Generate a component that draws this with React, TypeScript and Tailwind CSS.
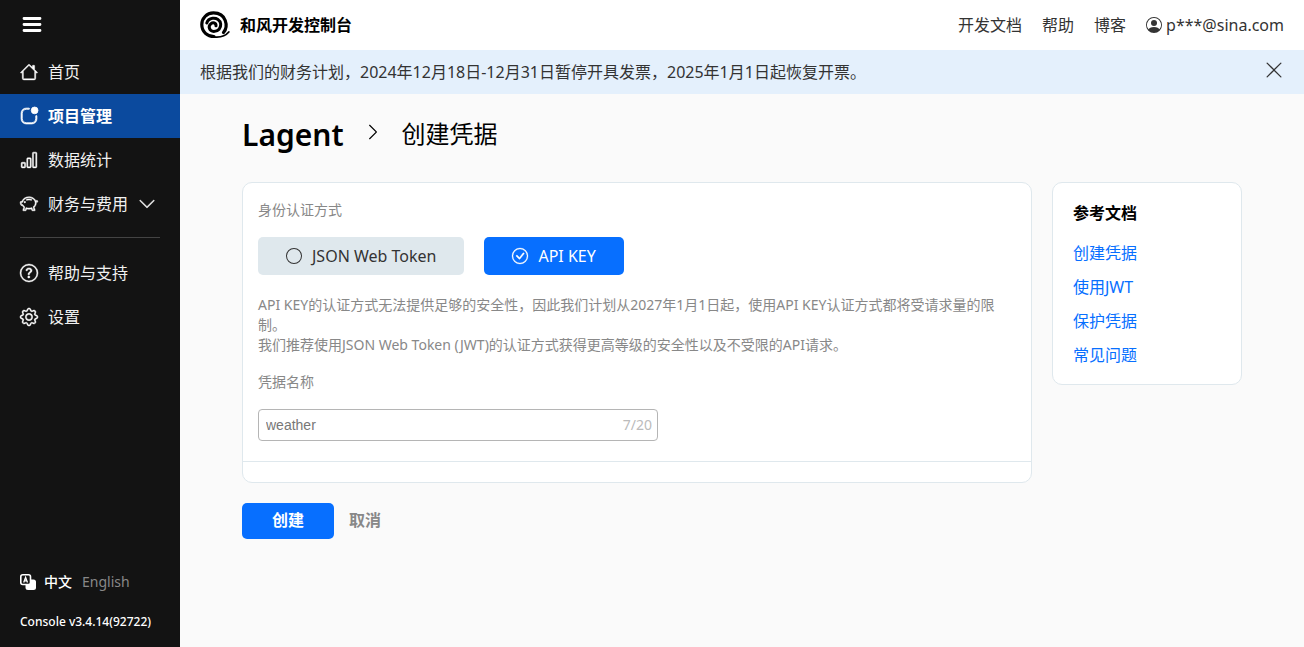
import { useState } from 'react';
import type { IconType } from 'react-icons';
import {
  BsAppIndicator,
  BsBarChart,
  BsCheckCircle,
  BsChevronDown,
  BsChevronRight,
  BsCircle,
  BsGear,
  BsHouse,
  BsPersonCircle,
  BsPiggyBank,
  BsQuestionCircle,
  BsXLg
} from 'react-icons/bs';

type NavItem = {
  label: string;
  icon: IconType;
  active?: boolean;
  expandable?: boolean;
};

const mainNav: NavItem[] = [
  { label: '首页', icon: BsHouse },
  { label: '项目管理', icon: BsAppIndicator, active: true },
  { label: '数据统计', icon: BsBarChart },
  { label: '财务与费用', icon: BsPiggyBank, expandable: true }
];

const extraNav: NavItem[] = [
  { label: '帮助与支持', icon: BsQuestionCircle },
  { label: '设置', icon: BsGear }
];

const docs = ['创建凭据', '使用JWT', '保护凭据', '常见问题'];

function NavLink({ item }: { item: NavItem }) {
  const Icon = item.icon;
  return (
    <a
      href="#"
      className={`flex h-11 items-center px-5 text-base ${item.active ? 'bg-[#0b4a9e] font-bold text-white' : 'text-[#f1f1f1]'}`}
    >
      <Icon className={`mr-2.5 size-[18px] shrink-0 overflow-visible text-white ${item.active ? 'stroke-[0.7]' : 'stroke-[0.4]'}`} />
      {item.label}
      {item.expandable && <BsChevronDown className="ml-2.5 size-[18px] shrink-0 stroke-[0.4]" />}
    </a>
  );
}

function Logo() {
  return (
    <svg className="h-7 w-[30px]" viewBox="0 0 30 28" fill="none" stroke="#000" strokeLinecap="round">
      <path strokeWidth="3.2" d="M23.500 21.500C28.500 15.500 26.500 2 13.500 1.900C6.500 2 1.800 7.500 1.800 13.500C1.800 21 7.500 25.500 14 25.500" />
      <path strokeWidth="3" d="M16 14.800C16.200 11.800 13 11 11 12.600C7.500 15.500 9.500 20.400 13.800 20.400C18.500 20.400 21 17 20.700 13C20.300 8.800 16.500 6.800 12.500 7.300C9.500 7.700 7.500 9.600 6.800 12" />
      <path strokeWidth="1.800" d="M13 25.800C20 26.800 25.500 25 28.800 21" />
    </svg>
  );
}

function LanguageIcon() {
  return (
    <svg className="size-4" viewBox="0 0 16 16">
      <rect x="5.500" y="5.500" width="10.500" height="10.500" rx="2.500" fill="#fff" />
      <rect x="0.800" y="0.800" width="9.700" height="9.700" rx="2" fill="#131313" stroke="#fff" strokeWidth="1.600" />
      <path d="M3.700 8.500L5.600 3.400L7.500 8.500M4.500 6.800H6.900" fill="none" stroke="#fff" strokeWidth="1.300" />
    </svg>
  );
}

export default function App() {
  const [method, setMethod] = useState('key');
  const [name, setName] = useState('weather');

  return (
    <div className="flex min-h-screen bg-[#fafafa] font-['Noto_Sans','Noto_Sans_CJK_SC',sans-serif] text-base text-[#333]">
      <aside className="flex w-[180px] shrink-0 flex-col bg-[#131313] text-white">
        <div className="flex h-[50px] items-center px-[22px]">
          <button type="button" aria-label="菜单">
            <svg className="h-4 w-5" viewBox="0 0 20 16" stroke="currentColor" strokeWidth="2.800" strokeLinecap="round">
              <path d="M2 1.500H18M2 7.500H18M2 13.500H18" />
            </svg>
          </button>
        </div>
        <nav>
          {mainNav.map((item) => (
            <NavLink key={item.label} item={item} />
          ))}
          <hr className="mx-5 mt-[11px] mb-[13px] border-[#444]" />
          {extraNav.map((item) => (
            <NavLink key={item.label} item={item} />
          ))}
        </nav>

        <div className="mt-auto px-5 pb-[15px]">
          <div className="flex items-center text-sm leading-5">
            <LanguageIcon />
            <button type="button" className="ml-2 font-medium">中文</button>
            <button type="button" className="ml-2.5 text-[#888]">English</button>
          </div>
          <p className="mt-5 text-xs leading-5 font-medium">Console v3.4.14(92722)</p>
        </div>
      </aside>

      <div className="min-w-0 flex-1">
        <header className="flex h-[50px] items-center justify-between bg-white px-5">
          <a href="#" className="flex items-center gap-2.5 font-bold text-black">
            <Logo />
            和风开发控制台
          </a>
          <nav className="flex items-center gap-5">
            <a href="#">开发文档</a>
            <a href="#">帮助</a>
            <a href="#">博客</a>
            <a href="#" className="flex items-center gap-1">
              <BsPersonCircle className="size-4" />
              p***@sina.com
            </a>
          </nav>
        </header>

        <div className="flex h-11 items-center justify-between bg-[#e4f0fc] px-5">
          <p>根据我们的财务计划，2024年12月18日-12月31日暂停开具发票，2025年1月1日起恢复开票。</p>
          <button type="button" aria-label="关闭" className="mb-1">
            <BsXLg className="size-5" />
          </button>
        </div>

        <main className="mx-auto max-w-[1000px] pt-[18px]">
          <div className="flex h-11 items-center text-black">
            <h1 className="text-[30px] font-semibold">Lagent</h1>
            <BsChevronRight className="mx-5 mb-1 size-[18px]" />
            <h2 className="text-2xl">创建凭据</h2>
          </div>

          <div className="mt-[26px] flex items-start gap-5">
            <form className="min-w-0 flex-1" onSubmit={(e) => e.preventDefault()}>
              <div className="rounded-[10px] border border-[#dfe8ed] bg-white">
                <div className="border-b border-[#dfe8ed] px-[15px] pt-[17px] pb-5 text-sm leading-5 text-[#888]">
                  <p>身份认证方式</p>
                  <div className="mt-[17px] flex gap-5 text-base">
                    <button
                      type="button"
                      onClick={() => setMethod('jwt')}
                      className={`flex h-[38px] items-center gap-2.5 rounded-[5px] px-7 ${method === 'jwt' ? 'bg-[#076fff] text-white' : 'bg-[#dfe8ed] text-[#333]'}`}
                    >
                      {method === 'jwt' ? <BsCheckCircle className="stroke-[0.3]" /> : <BsCircle />}
                      JSON Web Token
                    </button>
                    <button
                      type="button"
                      onClick={() => setMethod('key')}
                      className={`flex h-[38px] items-center gap-2.5 rounded-[5px] px-7 ${method === 'key' ? 'bg-[#076fff] text-white' : 'bg-[#dfe8ed] text-[#333]'}`}
                    >
                      {method === 'key' ? <BsCheckCircle className="overflow-visible stroke-[0.3]" /> : <BsCircle />}
                      API KEY
                    </button>
                  </div>
                  <p className="mt-5">
                    API KEY的认证方式无法提供足够的安全性，因此我们计划从2027年1月1日起，使用API KEY认证方式都将受请求量的限制。
                    <br />
                    我们推荐使用JSON Web Token (JWT)的认证方式获得更高等级的安全性以及不受限的API请求。
                  </p>
                  <label htmlFor="name" className="mt-[17px] block">凭据名称</label>
                  <div className="mt-[17px] flex h-8 w-[400px] items-center rounded-[4px] border border-[#b5b5b5] pr-[5px] pl-[7px]">
                    <input
                      id="name"
                      value={name}
                      maxLength={20}
                      onChange={(e) => setName(e.target.value)}
                      className="min-w-0 flex-1 font-['Liberation_Sans','Noto_Sans_CJK_SC',sans-serif] text-[#777] outline-none"
                    />
                    <span className="text-[#bbb]">{name.length}/20</span>
                  </div>
                </div>
                <div className="h-5" />
              </div>

              <div className="mt-5 flex items-center gap-[15px] font-bold">
                <button type="submit" className="h-9 rounded-[5px] bg-[#076fff] px-[30px] pb-0.5 text-white">创建</button>
                <button type="button" className="pb-0.5 text-[#888]">取消</button>
              </div>
            </form>

            <section className="w-[190px] shrink-0 rounded-[10px] border border-[#dfe8ed] bg-white px-5 pt-[18px] pb-[17px]">
              <h3 className="font-bold text-black">参考文档</h3>
              <ul className="mt-4 space-y-2.5">
                {docs.map((doc) => (
                  <li key={doc}>
                    <a href="#" className="text-[#076fff]">{doc}</a>
                  </li>
                ))}
              </ul>
            </section>
          </div>
        </main>
      </div>
    </div>
  );
}
